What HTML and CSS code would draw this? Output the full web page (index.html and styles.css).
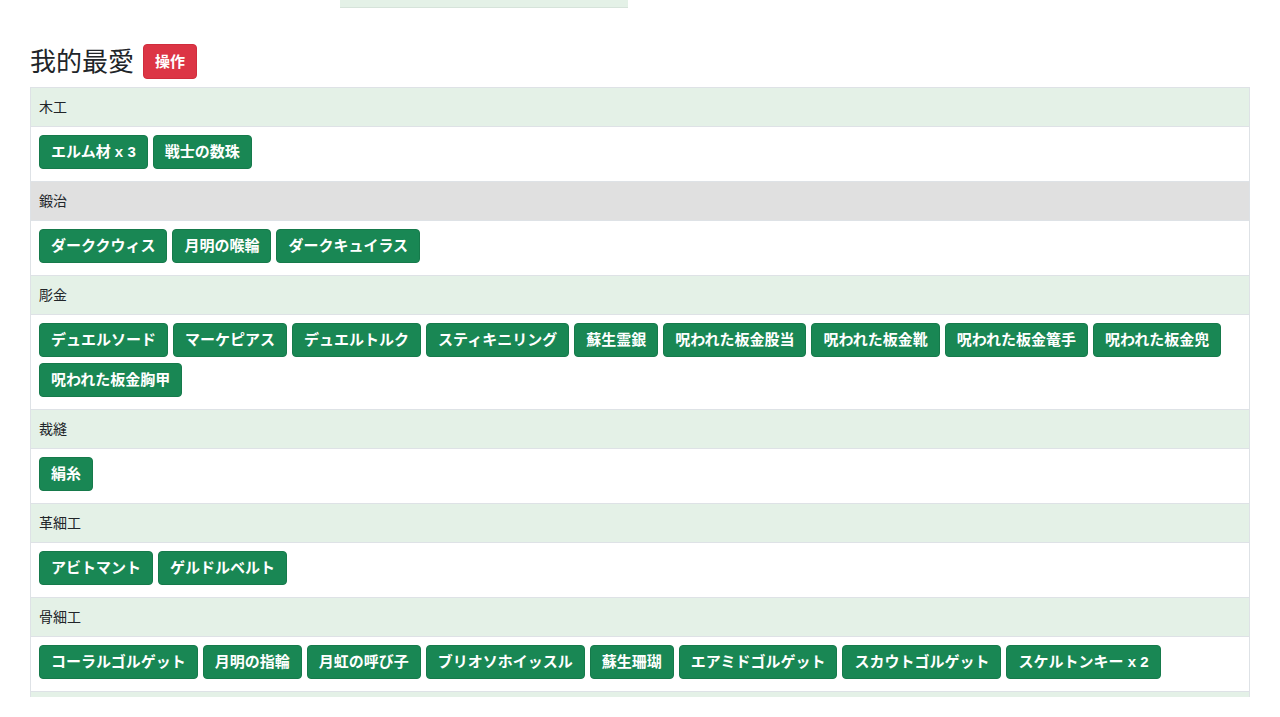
FILE: index.html
```html
<!DOCTYPE html>
<html lang="ja">
<head>
<meta charset="utf-8">
<title>我的最愛</title>
<link rel="stylesheet" href="styles.css">
</head>
<body>
<div class="page">
  <div class="topstrip"><div class="topcell"></div></div>

  <div class="title-row">
    <h3 class="title">我的最愛</h3>
    <button class="btn btn-danger">操作</button>
  </div>

  <div class="fav-table">
    <div class="cat">木工</div>
    <div class="items">
      <button class="btn btn-success">エルム材 x 3</button>
      <button class="btn btn-success">戦士の数珠</button>
    </div>

    <div class="cat cat-active">鍛治</div>
    <div class="items">
      <button class="btn btn-success">ダーククウィス</button>
      <button class="btn btn-success">月明の喉輪</button>
      <button class="btn btn-success">ダークキュイラス</button>
    </div>

    <div class="cat">彫金</div>
    <div class="items">
      <button class="btn btn-success">デュエルソード</button>
      <button class="btn btn-success">マーケピアス</button>
      <button class="btn btn-success">デュエルトルク</button>
      <button class="btn btn-success">スティキニリング</button>
      <button class="btn btn-success">蘇生霊銀</button>
      <button class="btn btn-success">呪われた板金股当</button>
      <button class="btn btn-success">呪われた板金靴</button>
      <button class="btn btn-success">呪われた板金篭手</button>
      <button class="btn btn-success">呪われた板金兜</button>
      <button class="btn btn-success">呪われた板金胸甲</button>
    </div>

    <div class="cat">裁縫</div>
    <div class="items">
      <button class="btn btn-success">絹糸</button>
    </div>

    <div class="cat">革細工</div>
    <div class="items">
      <button class="btn btn-success">アビトマント</button>
      <button class="btn btn-success">ゲルドルベルト</button>
    </div>

    <div class="cat">骨細工</div>
    <div class="items">
      <button class="btn btn-success">コーラルゴルゲット</button>
      <button class="btn btn-success">月明の指輪</button>
      <button class="btn btn-success">月虹の呼び子</button>
      <button class="btn btn-success">ブリオソホイッスル</button>
      <button class="btn btn-success">蘇生珊瑚</button>
      <button class="btn btn-success">エアミドゴルゲット</button>
      <button class="btn btn-success">スカウトゴルゲット</button>
      <button class="btn btn-success">スケルトンキー x 2</button>
    </div>

    <div class="cat cat-empty"></div>
  </div>
</div>
</body>
</html>
```

FILE: styles.css
```css
* {
  box-sizing: border-box;
}

html, body {
  margin: 0;
  padding: 0;
  background: #ffffff;
}

body {
  font-family: "Liberation Sans", "Noto Sans CJK JP", sans-serif;
  color: #212529;
  font-size: 14px;
}

.page {
  padding: 0 30px;
}

.topstrip {
  height: 8px;
  padding-left: 310px;
}

.topcell {
  width: 288px;
  height: 8px;
  background: #e4f1e7;
  border-bottom: 1px solid #d6e3da;
}

.title-row {
  display: flex;
  align-items: center;
  margin-top: 36px;
  height: 35px;
  margin-bottom: 8px;
}

.title {
  margin: 0 9px 0 0;
  font-size: 26px;
  font-weight: 400;
  line-height: 32px;
  color: #212529;
}

.btn {
  display: inline-block;
  font-family: "Liberation Sans", "Noto Sans CJK JP", sans-serif;
  font-size: 15px;
  font-weight: 600;
  line-height: 20px;
  padding: 6px 11px;
  border: 1px solid transparent;
  border-radius: 4px;
  color: #ffffff;
  cursor: pointer;
  margin: 0;
  white-space: nowrap;
}

.btn-danger {
  background: #dc3545;
  border-color: #d02d3d;
  height: 35px;
  padding-top: 7px;
  padding-bottom: 6px;
}

.btn-success {
  background: #198754;
  border-color: #167a4b;
  height: 34px;
}

.fav-table {
  border: 1px solid #dee2e6;
  border-bottom: none;
  height: 610px;
  overflow: hidden;
}

.cat {
  background: #e4f1e7;
  padding: 8px 8px;
  line-height: 22px;
  font-size: 14px;
  border-bottom: 1px solid #dee2e6;
  color: #212529;
}

.cat-empty {
  height: 39px;
}

.cat-active {
  background: #e0e0e0;
}

.items {
  display: flex;
  flex-wrap: wrap;
  gap: 6px 5px;
  padding: 8px 8px 12px;
  border-bottom: 1px solid #dee2e6;
  background: #ffffff;
}
```
